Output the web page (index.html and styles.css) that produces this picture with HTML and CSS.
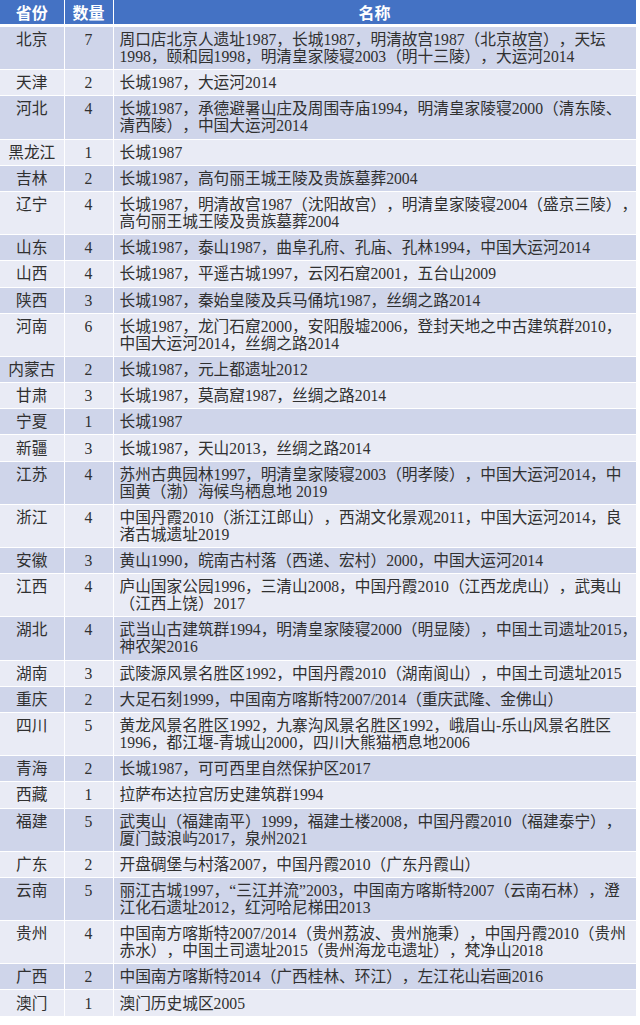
FILE: index.html
```html
<!DOCTYPE html>
<html lang="zh-CN">
<head>
<meta charset="utf-8">
<title>世界遗产</title>
<link rel="stylesheet" href="styles.css">
</head>
<body>
<table class="heritage">
<colgroup><col class="c-prov"><col class="c-num"><col class="c-name"></colgroup>
<thead>
<tr><th>省份</th><th>数量</th><th>名称</th></tr>
</thead>
<tbody>
<tr><td class="prov">北京</td><td class="num">7</td><td class="name">周口店北京人遗址1987，长城1987，明清故宫1987（北京故宫），天坛<br>1998，颐和园1998，明清皇家陵寝2003（明十三陵），大运河2014</td></tr>
<tr><td class="prov">天津</td><td class="num">2</td><td class="name">长城1987，大运河2014</td></tr>
<tr><td class="prov">河北</td><td class="num">4</td><td class="name">长城1987，承德避暑山庄及周围寺庙1994，明清皇家陵寝2000（清东陵、<br>清西陵），中国大运河2014</td></tr>
<tr><td class="prov">黑龙江</td><td class="num">1</td><td class="name">长城1987</td></tr>
<tr><td class="prov">吉林</td><td class="num">2</td><td class="name">长城1987，高句丽王城王陵及贵族墓葬2004</td></tr>
<tr><td class="prov">辽宁</td><td class="num">4</td><td class="name">长城1987，明清故宫1987（沈阳故宫），明清皇家陵寝2004（盛京三陵），<br>高句丽王城王陵及贵族墓葬2004</td></tr>
<tr><td class="prov">山东</td><td class="num">4</td><td class="name">长城1987，泰山1987，曲阜孔府、孔庙、孔林1994，中国大运河2014</td></tr>
<tr><td class="prov">山西</td><td class="num">4</td><td class="name">长城1987，平遥古城1997，云冈石窟2001，五台山2009</td></tr>
<tr><td class="prov">陕西</td><td class="num">3</td><td class="name">长城1987，秦始皇陵及兵马俑坑1987，丝绸之路2014</td></tr>
<tr><td class="prov">河南</td><td class="num">6</td><td class="name">长城1987，龙门石窟2000，安阳殷墟2006，登封天地之中古建筑群2010，<br>中国大运河2014，丝绸之路2014</td></tr>
<tr><td class="prov">内蒙古</td><td class="num">2</td><td class="name">长城1987，元上都遗址2012</td></tr>
<tr><td class="prov">甘肃</td><td class="num">3</td><td class="name">长城1987，莫高窟1987，丝绸之路2014</td></tr>
<tr><td class="prov">宁夏</td><td class="num">1</td><td class="name">长城1987</td></tr>
<tr><td class="prov">新疆</td><td class="num">3</td><td class="name">长城1987，天山2013，丝绸之路2014</td></tr>
<tr><td class="prov">江苏</td><td class="num">4</td><td class="name">苏州古典园林1997，明清皇家陵寝2003（明孝陵），中国大运河2014，中<br>国黄（渤）海候鸟栖息地 2019</td></tr>
<tr><td class="prov">浙江</td><td class="num">4</td><td class="name">中国丹霞2010（浙江江郎山），西湖文化景观2011，中国大运河2014，良<br>渚古城遗址2019</td></tr>
<tr><td class="prov">安徽</td><td class="num">3</td><td class="name">黄山1990，皖南古村落（西递、宏村）2000，中国大运河2014</td></tr>
<tr><td class="prov">江西</td><td class="num">4</td><td class="name">庐山国家公园1996，三清山2008，中国丹霞2010（江西龙虎山），武夷山<br>（江西上饶）2017</td></tr>
<tr><td class="prov">湖北</td><td class="num">4</td><td class="name">武当山古建筑群1994，明清皇家陵寝2000（明显陵），中国土司遗址2015，<br>神农架2016</td></tr>
<tr><td class="prov">湖南</td><td class="num">3</td><td class="name">武陵源风景名胜区1992，中国丹霞2010（湖南阆山），中国土司遗址2015</td></tr>
<tr><td class="prov">重庆</td><td class="num">2</td><td class="name">大足石刻1999，中国南方喀斯特2007/2014（重庆武隆、金佛山）</td></tr>
<tr><td class="prov">四川</td><td class="num">5</td><td class="name">黄龙风景名胜区1992，九寨沟风景名胜区1992，峨眉山-乐山风景名胜区<br>1996，都江堰-青城山2000，四川大熊猫栖息地2006</td></tr>
<tr><td class="prov">青海</td><td class="num">2</td><td class="name">长城1987，可可西里自然保护区2017</td></tr>
<tr><td class="prov">西藏</td><td class="num">1</td><td class="name">拉萨布达拉宫历史建筑群1994</td></tr>
<tr><td class="prov">福建</td><td class="num">5</td><td class="name">武夷山（福建南平）1999，福建土楼2008，中国丹霞2010（福建泰宁），<br>厦门鼓浪屿2017，泉州2021</td></tr>
<tr><td class="prov">广东</td><td class="num">2</td><td class="name">开盘碉堡与村落2007，中国丹霞2010（广东丹霞山）</td></tr>
<tr><td class="prov">云南</td><td class="num">5</td><td class="name">丽江古城1997，“三江并流”2003，中国南方喀斯特2007（云南石林），澄<br>江化石遗址2012，红河哈尼梯田2013</td></tr>
<tr><td class="prov">贵州</td><td class="num">4</td><td class="name">中国南方喀斯特2007/2014（贵州荔波、贵州施秉），中国丹霞2010（贵州<br>赤水），中国土司遗址2015（贵州海龙屯遗址），梵净山2018</td></tr>
<tr><td class="prov">广西</td><td class="num">2</td><td class="name">中国南方喀斯特2014（广西桂林、环江），左江花山岩画2016</td></tr>
<tr><td class="prov">澳门</td><td class="num">1</td><td class="name">澳门历史城区2005</td></tr>
</tbody>
</table>
</body>
</html>
```

FILE: styles.css
```css
html, body {
  margin: 0;
  padding: 0;
  background: #ffffff;
}

body {
  font-family: "Liberation Serif", "Noto Sans CJK SC", sans-serif;
  font-size: 15.7px;
  color: #303030;
  text-spacing-trim: space-all;
  font-feature-settings: "chws" 0, "halt" 0, "palt" 0;
  font-kerning: none;
}

.heritage {
  width: 636px;
  border-collapse: collapse;
  table-layout: fixed;
}

.c-prov { width: 64px; }
.c-num { width: 49px; }
.c-name { width: 523px; }

.heritage th {
  background: #4472c4;
  color: #ffffff;
  font-family: "Noto Sans CJK SC", sans-serif;
  font-weight: 700;
  font-size: 16px;
  height: 24px;
  line-height: 22px;
  padding: 0;
  text-align: center;
  border-left: 1px solid #ffffff;
  border-right: 1px solid #ffffff;
  border-bottom: 3px solid #ffffff;
}

.heritage td {
  line-height: 17px;
  padding: 4.1px 6px;
  border: 1px solid #ffffff;
  vertical-align: top;
  white-space: nowrap;
}

.heritage tbody tr:nth-child(odd) td {
  background: #cfd5ea;
}

.heritage tbody tr:nth-child(even) td {
  background: #e9ebf5;
}

.heritage th:first-child,
.heritage td:first-child {
  border-left: none;
}

.prov,
.num {
  text-align: center;
}

.prov {
  padding-left: 0;
  padding-right: 0;
}

.name {
  text-align: left;
  padding-left: 5px;
  padding-right: 0;
}
```
